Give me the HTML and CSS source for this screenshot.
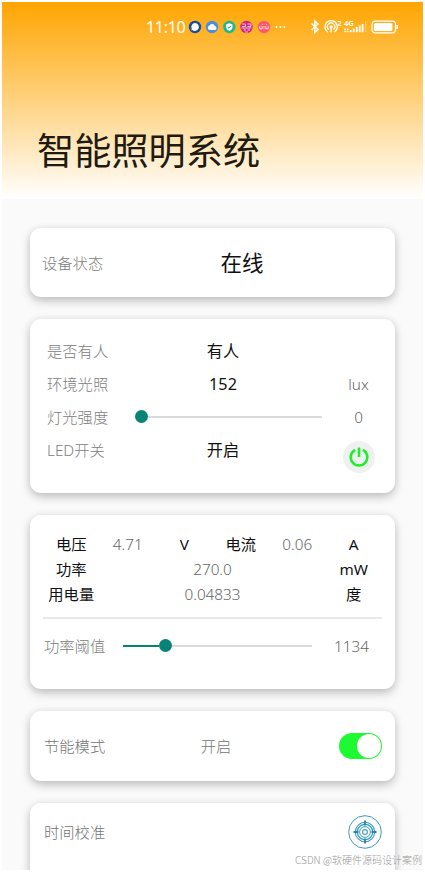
FILE: index.html
```html
<!DOCTYPE html>
<html lang="zh-CN">
<head>
<meta charset="utf-8">
<title>智能照明系统</title>
<link rel="stylesheet" href="styles.css">
</head>
<body>
<main class="phone">
  <header class="hero">
    <div class="status">
      <span class="clock">11:10</span>
      <svg class="apps" width="94" height="14" viewBox="0 0 94 14">
        <circle cx="7" cy="7" r="6.2" fill="#174aa0"/><path d="M7 3a4 4 0 1 1-2.600 7.100L3.500 10.500l.2-1.800A4 4 0 0 1 7 3z" fill="#fff"/>
        <circle cx="24" cy="7" r="6.2" fill="#4a8fe2"/><path d="M21.500 10a2.200 2.200 0 0 1-.2-4.200 3 3 0 0 1 5.600.2 2.100 2.100 0 0 1 .3 4z" fill="#fff"/>
        <circle cx="41.300" cy="7" r="6.200" fill="#22b78c"/><path d="M41.300 3.300l3.200 1.200v2.500c0 2-1.400 3.300-3.200 4-1.800-.7-3.200-2-3.200-4V4.500z" fill="#fff"/><path d="M39.800 7l1.200 1.200 2-2.200" fill="none" stroke="#22b78c"/>
        <circle cx="58.500" cy="7" r="6.200" fill="#cf247d"/><path d="M54 4h3.500v2.500H54M59.500 4H63v2.500h-3.500M53.500 8h10M55.500 10h2.500M59.500 10H62M57 12h3" fill="none" stroke="#fbd9e8" stroke-width=".9"/>
        <circle cx="76" cy="7" r="6.200" fill="#fa5a70"/><path d="M71.800 6v2.800h2.400V6m1.800 2.800V6m1.800 0v2.800h2.400V6M74 4.500h.8M78 4.500h.8" fill="none" stroke="#ffd9de" stroke-width=".9"/>
        <g fill="#fff"><circle cx="88.500" cy="7" r=".9"/><circle cx="92.500" cy="7" r=".9"/></g>
      </svg>
      <svg class="system" width="120" height="18" viewBox="0 0 120 18" fill="none" stroke="#fff">
        <circle cx="2.300" cy="9" r=".9" fill="#fff" stroke="none"/>
        <path d="M29.500 5.500l6.500 6-3.200 3V3l3.200 3-6.500 6" stroke-width="1.500"/>
        <g stroke-width="1.300" stroke-linecap="round"><path d="M45.400 13.700a6.200 6.200 0 1 1 7.400 0"/><path d="M46.400 11.300a3.700 3.700 0 1 1 5.400 0"/><circle cx="49.100" cy="9" r="1" fill="#fff"/><path d="M49.100 10.500v3.500"/></g>
        <g fill="#fff" stroke="none"><text class="tiny" x="55.500" y="7.500">2</text><text class="network" x="62" y="8">4G</text></g>
        <path d="M63.200 10.500v1.500M65.700 10.500v1.500" stroke-width="1.500"/>
        <path d="M63.200 12.800v1.400M65.700 12.800v1.400M68.700 12v2.200M71.700 10.700v3.500M74.700 9v5.200M77.700 7.500v6.700M80.600 6v8.200" stroke-width="1.800"/>
        <path d="M83.600 3v11" stroke-opacity=".35" stroke-width="1.300"/>
        <rect x="90" y="3.200" width="23.500" height="11.600" rx="3.200" stroke-width="1.200"/><rect x="91.900" y="5" width="18.500" height="8" rx="1.500" fill="#fff" stroke="none"/><path d="M115.200 7v4" stroke-width="1.600"/>
      </svg>
    </div>
    <h1 class="title">智能照明系统</h1>
  </header>

  <section class="cards">
    <article class="card device">
      <span class="label">设备状态</span><span class="state">在线</span>
    </article>

    <article class="card light">
      <span class="label">是否有人</span><span class="value">有人</span><span></span>
      <span class="label">环境光照</span><span class="value">152</span><span class="unit">lux</span>
      <span class="label">灯光强度</span>
      <div class="slider intensity"><i class="thumb"></i><i class="rest"></i></div>
      <span class="unit">0</span>
      <span class="label">LED开关</span><span class="value">开启</span>
      <button class="power" aria-label="LED开关">
        <svg width="32" height="32" viewBox="0 0 32 32" fill="none" stroke="#1df02b" stroke-width="2.600"><path d="M12.100 8.900a8.300 8.300 0 1 0 7.800 0M16 6.500v9.600"/></svg>
      </button>
    </article>

    <article class="card energy">
      <div class="meter">
        <span>电压</span><span class="num">4.71</span><span>V</span><span>电流</span><span class="num">0.06</span><span>A</span>
        <span>功率</span><span class="num wide">270.0</span><span>mW</span>
        <span>用电量</span><span class="num wide">0.04833</span><span>度</span>
      </div>
      <div class="threshold">
        <span class="label">功率阈值</span>
        <div class="slider"><i class="filled"></i><i class="thumb"></i><i class="rest"></i></div>
        <span class="unit">1134</span>
      </div>
    </article>

    <article class="card saving">
      <span class="label">节能模式</span><span class="mode">开启</span>
      <span class="toggle"><i class="knob"></i></span>
    </article>

    <article class="card calibrate">
      <span class="label">时间校准</span>
      <svg width="34" height="34" viewBox="0 0 34 34" fill="none" stroke="#3b9dbd">
        <circle cx="17" cy="17" r="16.300" stroke-width="1"/>
        <circle cx="17" cy="17" r="9.700" stroke-width="1.100"/>
        <circle cx="17" cy="17" r="7.700" stroke-width="1.300"/>
        <circle cx="17" cy="17" r="5.400" stroke-width="1"/>
        <circle cx="17" cy="17" r="2.400" stroke-width="1.100"/>
        <path d="M17 5.500v5M17 23.500v5M5.500 17h5M23.500 17h5" stroke="#2385aa" stroke-width="1.800"/>
      </svg>
    </article>
  </section>
  <span class="credit">CSDN @软硬件源码设计案例</span>
</main>
</body>
</html>
```
FILE: styles.css
```css
* {
  box-sizing: border-box;
}

body {
  margin: 0;
  padding: 2px;
  background: #fff;
  font-family: "Noto Sans", "Noto Sans CJK SC", sans-serif;
  font-weight: 300;
  line-height: 22px;
}

.phone {
  position: relative;
  width: 421px;
  height: 868px;
  overflow: hidden;
  background: #fafafa;
}

.hero {
  height: 197px;
  background: linear-gradient(#ffa500, #fff);
}

.status {
  display: flex;
  align-items: center;
  height: 49px;
  padding-left: 144px;
  color: #fff;
}

.clock {
  width: 42px;
  font-size: 16px;
  font-weight: 400;
  letter-spacing: -0.3px;
  white-space: nowrap;
}

.apps,
.system {
  flex: none;
}

.tiny {
  font: 600 7px "Noto Sans", sans-serif;
}

.network {
  font: 600 7.500px "Noto Sans", sans-serif;
}

.title {
  margin: 71px 0 0 35px;
  color: #201a10;
  font-family: "Noto Sans CJK SC", sans-serif;
  font-size: 37.200px;
  font-weight: 400;
  line-height: 54px;
}

.cards {
  display: flex;
  flex-direction: column;
  gap: 22px;
  padding: 29px 28px 0;
}

.card {
  width: 365px;
  border-radius: 11px;
  background: #fff;
  box-shadow: 0 4px 10px rgba(0, 0, 0, 0.22), 0 0 8px rgba(0, 0, 0, 0.06);
}

.label {
  color: #808080;
  font-size: 15.300px;
  white-space: nowrap;
}

.unit {
  color: #666;
  font-size: 15.300px;
  text-align: center;
}

.value {
  color: #111;
  font-size: 16.200px;
  font-weight: 400;
  text-align: center;
}

.device {
  display: grid;
  grid-template-columns: 116px 168px;
  align-items: center;
  height: 69px;
  padding-left: 12px;
}

.state {
  color: #111;
  font-size: 21.500px;
  font-weight: 400;
  text-align: center;
}

.light {
  display: grid;
  grid-template-columns: 77px 198px 73px;
  grid-auto-rows: 33px;
  align-items: center;
  height: 174px;
  padding: 15px 0 0 17px;
}

.slider {
  display: flex;
  align-items: center;
  width: 189px;
}

.intensity {
  width: 187px;
  margin-left: 11px;
}

.thumb {
  width: 13px;
  height: 13px;
  border-radius: 50%;
  background: #088477;
}

.filled {
  width: 36px;
  height: 2px;
  background: #088477;
}

.rest {
  flex: 1;
  height: 2px;
  background: #dadada;
}

.power {
  justify-self: center;
  width: 32px;
  height: 32px;
  margin-top: 15px;
  padding: 0;
  border: 0;
  border-radius: 50%;
  background: #eff1f1;
}

.power svg {
  display: block;
}

.energy {
  height: 174px;
  padding: 16px 13px 0;
}

.meter {
  display: grid;
  grid-template-columns: repeat(6, 1fr);
  grid-auto-rows: 25px;
  align-items: center;
  height: 88px;
  border-bottom: 2px solid #e9e9e9;
  color: #111;
  font-size: 15.300px;
  font-weight: 400;
  text-align: center;
}

.num {
  color: #666;
  font-weight: 300;
}

.wide {
  grid-column: span 4;
}

.threshold {
  display: grid;
  grid-template-columns: 79px 189px 79px;
  align-items: center;
  height: 53px;
  padding-left: 1px;
}

.saving {
  display: grid;
  grid-template-columns: 142px 60px 1fr;
  align-items: center;
  height: 70px;
  padding: 0 13px 0 14px;
}

.mode {
  color: #747474;
  font-size: 15.300px;
  text-align: center;
}

.toggle {
  display: flex;
  align-items: center;
  justify-content: flex-end;
  justify-self: end;
  width: 43px;
  height: 26px;
  padding: 1px;
  border-radius: 13px;
  background: #1dfa32;
}

.knob {
  width: 24px;
  height: 24px;
  border-radius: 50%;
  background: #fff;
}

.calibrate {
  display: flex;
  align-items: flex-start;
  justify-content: space-between;
  height: 100px;
  padding: 12px 13px 0 14px;
}

.calibrate .label {
  line-height: 34px;
}

.saving .label,
.calibrate .label {
  color: #747474;
}

.credit {
  position: absolute;
  right: 1px;
  bottom: 2px;
  color: #999;
  font-family: "Noto Sans CJK SC", sans-serif;
  font-size: 10px;
  line-height: 16px;
  white-space: nowrap;
}
```
